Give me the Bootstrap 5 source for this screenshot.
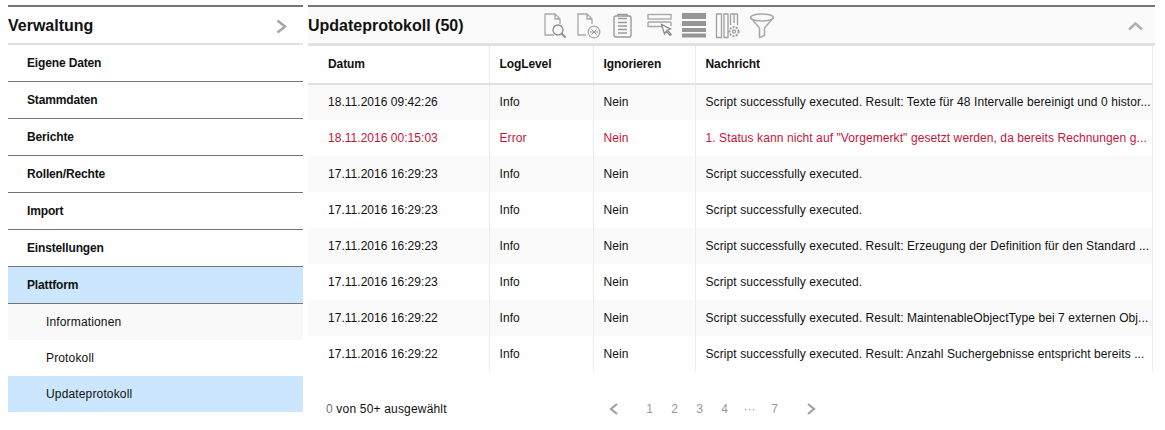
<!DOCTYPE html>
<html lang="de"><head><meta charset="utf-8">
<link href="https://cdn.jsdelivr.net/npm/bootstrap@5.3.0/dist/css/bootstrap.min.css" rel="stylesheet">
<style>
html,body{height:430px;overflow:hidden}
body{background:#fff;font-family:"Liberation Sans",Arial,sans-serif;font-size:12px;color:#111;padding:5px 10px 0 8px}
.wrap{gap:5px}
.side{width:295px;flex:none}
.main{width:847px;flex:none}
.phead{border-top:2px solid #757575;border-bottom:2px solid #e1e1e1;height:40px;padding-top:2px}
.main .phead{background:#fafafa;border-bottom-width:3px;height:41px}
.ptitle{font-size:16px;font-weight:700;line-height:20px;color:#111}
.navi{height:37px;border-bottom:1px solid #757575;padding-left:19px;font-weight:700;display:flex;align-items:center;letter-spacing:-.15px}
.navi.on{background:#cbe6fd}
.subi{height:36px;padding-left:38px;display:flex;align-items:center;letter-spacing:.15px}
.subi.alt{background:#f9f9f9}
.subi.on{background:#cbe6fd}
.tools{margin-left:80px}
.tools svg{display:block;flex:none}
.gap-a{margin-left:9px}.gap-b{margin-left:10px}.gap-c{margin-left:14px}.gap-d{margin-left:8px}
.upchev{margin-left:auto;margin-right:12px;margin-top:-1px}
.tbl{table-layout:fixed;width:845px;margin:0;border-collapse:collapse;font-size:12px}
.tbl th,.tbl td{padding:0 10px;white-space:nowrap;overflow:hidden;vertical-align:middle;border:0;background:transparent;box-shadow:none;color:inherit}
.tbl th{height:38px;padding-bottom:2px;border-right:1px solid #ececec;border-bottom:2px solid #e2e2e2;font-weight:700;color:#111;letter-spacing:-.1px}
.tbl th:first-child,.tbl td:first-child{padding-left:20px}
.tbl td{height:36px;border-right:1px solid #ececec;color:#111;letter-spacing:.09px;padding-bottom:1px}
.tbl td:first-child{letter-spacing:.03px}
.tbl td:last-child{padding-right:0}
.tbl tr.alt td{background:#fafafa}
.tbl tr.err td{color:#c3143c}
.tbl col:nth-child(1){width:181px}.tbl col:nth-child(2){width:104px}.tbl col:nth-child(3){width:102px}
.foot{padding:0 0 0 18px;height:74px}
.selinfo{width:122px;letter-spacing:.18px}
.pgs{margin-left:161px;color:#999}
.pgs span{width:25px;text-align:center;display:block}
.arrow-l{display:block;margin-right:18px}
.arrow-r{display:block;margin-left:19px}
</style></head><body>
<div class="d-flex wrap">
<div class="side">
<div class="phead d-flex align-items-center justify-content-between">
<span class="ptitle">Verwaltung</span>
<svg class="me-3" width="11" height="15" viewBox="0 0 11 15"><path d="M1.500 1.500 9 7.500l-7.500 6" fill="none" stroke="#a6a6a6" stroke-width="2.600"/></svg>
</div>
<div class="navi">Eigene Daten</div>
<div class="navi">Stammdaten</div>
<div class="navi">Berichte</div>
<div class="navi">Rollen/Rechte</div>
<div class="navi">Import</div>
<div class="navi">Einstellungen</div>
<div class="navi on">Plattform</div>
<div class="subi alt">Informationen</div>
<div class="subi">Protokoll</div>
<div class="subi on">Updateprotokoll</div>
</div>
<div class="main">
<div class="phead d-flex align-items-center">
<span class="ptitle">Updateprotokoll (50)</span>
<div class="tools d-flex align-items-center">
<svg width="24" height="26" viewBox="0 0 24 26" fill="none" stroke="#a8a8a8" stroke-width="1.300"><path d="M10 22H1V1h10l5 5v5M11 1v5h5"/><circle cx="14" cy="17" r="5" stroke="#8c8c8c"/><path d="M17.500 20.500l4 4" stroke="#8c8c8c" stroke-width="1.800"/></svg>
<svg class="gap-a" width="24" height="26" viewBox="0 0 24 26" fill="none" stroke="#a8a8a8" stroke-width="1.300"><path d="M9 22H1V1h9l5 5v5M10 1v5h5"/><circle cx="17" cy="19" r="5.800"/><path d="M13 19h8M14.500 16.500 17 19l-2.500 2.500M19.500 16.500 17 19l2.500 2.500" stroke="#999" stroke-width="1"/></svg>
<svg class="gap-b" width="22" height="26" viewBox="0 0 22 26" fill="none" stroke="#9a9a9a" stroke-width="1.400"><rect x="3" y="3" width="17" height="21" rx="2"/><path d="M7 3.500V1.500h9V3.500M7 5.500h9M7 9.500h9M7 13h9M7 16.500h9M7 20h9"/></svg>
<svg class="gap-c" width="26" height="26" viewBox="0 0 26 26" fill="none" stroke="#a8a8a8" stroke-width="1.400"><rect x="1" y="1.500" width="23" height="4.500"/><path d="M1 9h23M1 9v4.500h14M24 9v4"/><path d="M14.500 11.500l3 9.500 1.800-3 3.700 4.500 1.200-1-3.700-4.500 3-1z" fill="#fafafa" stroke="#888" stroke-width="1.200"/></svg>
<svg class="gap-d" width="26" height="26" viewBox="0 0 26 26"><g fill="#969696"><rect x="1" y="0" width="24" height="6"/><rect x="1" y="8" width="24" height="5"/><rect x="1" y="15" width="24" height="4"/><rect x="1" y="20.500" width="24" height="4"/></g></svg>
<svg class="gap-d" width="26" height="26" viewBox="0 0 26 26" fill="none" stroke="#a0a0a0" stroke-width="1.300"><path d="M1.500 1h5v23.500h-5zM9 1h4v23.500H9zM15.500 1v11M19 1v9M22.500 1h-7M22.500 1v11"/><circle cx="19" cy="18.500" r="4.500" stroke-dasharray="2 1.200" stroke-width="2"/><circle cx="19" cy="18.500" r="1.500"/></svg>
<svg class="gap-d" width="26" height="26" viewBox="0 0 26 26" fill="none" stroke="#a8a8a8" stroke-width="1.500"><ellipse cx="13" cy="4.500" rx="11.500" ry="3.500"/><path d="M1.500 4.500 10.500 15v9.500l5-2V15L24.500 4.500"/></svg>
</div>
<svg class="upchev" width="15" height="10" viewBox="0 0 15 10"><path d="M1 8.500l6.500-6 6.500 6" fill="none" stroke="#b0b0b0" stroke-width="2.600"/></svg>
</div>
<table class="table tbl">
<colgroup><col><col><col><col></colgroup>
<thead><tr><th>Datum</th><th>LogLevel</th><th>Ignorieren</th><th>Nachricht</th></tr></thead>
<tbody>
<tr class="alt"><td>18.11.2016 09:42:26</td><td>Info</td><td>Nein</td><td>Script successfully executed. Result: Texte für 48 Intervalle bereinigt und 0 histor...</td></tr>
<tr class="err"><td>18.11.2016 00:15:03</td><td>Error</td><td>Nein</td><td>1. Status kann nicht auf "Vorgemerkt" gesetzt werden, da bereits Rechnungen g...</td></tr>
<tr class="alt"><td>17.11.2016 16:29:23</td><td>Info</td><td>Nein</td><td>Script successfully executed.</td></tr>
<tr><td>17.11.2016 16:29:23</td><td>Info</td><td>Nein</td><td>Script successfully executed.</td></tr>
<tr class="alt"><td>17.11.2016 16:29:23</td><td>Info</td><td>Nein</td><td>Script successfully executed. Result: Erzeugung der Definition für den Standard ...</td></tr>
<tr><td>17.11.2016 16:29:23</td><td>Info</td><td>Nein</td><td>Script successfully executed.</td></tr>
<tr class="alt"><td>17.11.2016 16:29:22</td><td>Info</td><td>Nein</td><td>Script successfully executed. Result: MaintenableObjectType bei 7 externen Obj...</td></tr>
<tr><td>17.11.2016 16:29:22</td><td>Info</td><td>Nein</td><td>Script successfully executed. Result: Anzahl Suchergebnisse entspricht bereits ...</td></tr>
</tbody></table>
<div class="foot d-flex align-items-center">
<div class="selinfo text-nowrap"><span class="text-secondary">0</span> von 50+ ausgewählt</div>
<div class="pgs d-flex align-items-center">
<svg class="arrow-l" width="10" height="12" viewBox="0 0 10 12"><path d="M8 1 2 6l6 5" fill="none" stroke="#a0a0a0" stroke-width="2.200"/></svg>
<span>1</span><span>2</span><span>3</span><span>4</span><span>···</span><span>7</span>
<svg class="arrow-r" width="10" height="12" viewBox="0 0 10 12"><path d="M2 1l6 5-6 5" fill="none" stroke="#a0a0a0" stroke-width="2.200"/></svg>
</div>
</div>
</div>
</div>
<script src="https://cdn.jsdelivr.net/npm/bootstrap@5.3.0/dist/js/bootstrap.bundle.min.js"></script>
</body></html>
